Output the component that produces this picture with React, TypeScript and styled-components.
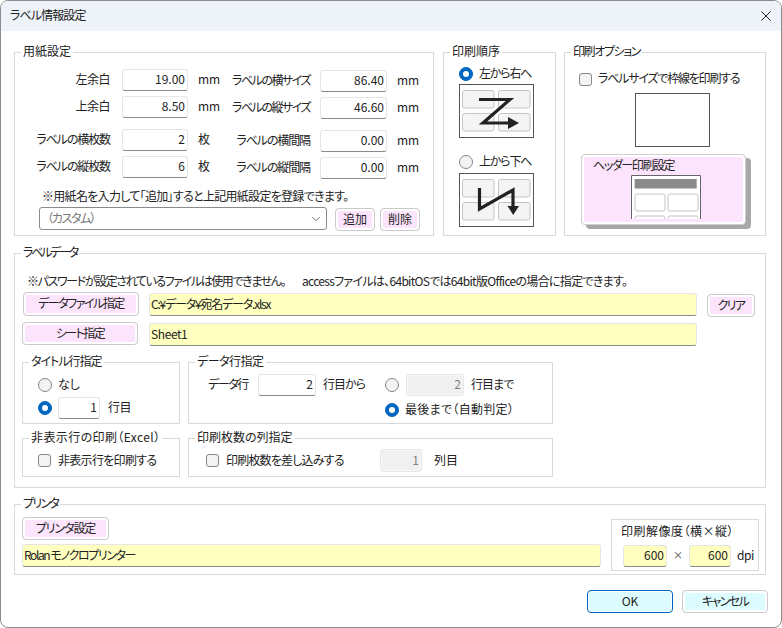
import React from "react";
import styled, { createGlobalStyle } from "styled-components";
import { ChevronDown } from "lucide-react";

const GlobalStyle = createGlobalStyle`
  html, body {
    margin: 0;
    padding: 0;
    background: #fff;
  }
  * {
    box-sizing: border-box;
  }
`;

const Win = styled.div`
  width: 782px;
  height: 628px;
  background: #fff;
  border: 1px solid #8c8c8c;
  border-radius: 8px;
  overflow: hidden;
  color: #222;
  font-family: "Noto Sans CJK JP", sans-serif;
  font-size: 12px;
  line-height: 16px;
  font-feature-settings: "palt";
  white-space: nowrap;
`;

const TitleBar = styled.div`
  height: 30px;
  background: #eef3fa;
  display: flex;
  align-items: center;
  justify-content: space-between;
  padding: 0 10px 0 9px;
`;

const Body = styled.div`
  padding: 21px 0 0 13px;
`;

const TopRow = styled.div`
  display: flex;
`;

const Group = styled.div<{ $w?: number; $h?: number; $ml?: number; $mt?: number; $pt?: number; $pl?: number }>`
  position: relative;
  width: ${(p) => (p.$w ? `${p.$w}px` : "auto")};
  height: ${(p) => (p.$h ? `${p.$h}px` : "auto")};
  margin-left: ${(p) => p.$ml || 0}px;
  margin-top: ${(p) => p.$mt || 0}px;
  padding-top: ${(p) => p.$pt || 0}px;
  padding-left: ${(p) => p.$pl || 0}px;
  border: 1px solid #d9d9d9;
`;

const Legend = styled.div<{ $sp?: number }>`
  position: absolute;
  top: -10px;
  left: 6px;
  padding: 0 2px;
  background: #fff;
  letter-spacing: ${(p) => p.$sp || 0}px;
`;

const PaperCols = styled.div`
  display: flex;
`;

const Col = styled.div<{ $w?: number; $pt?: number }>`
  display: flex;
  flex-direction: column;
  gap: 5px;
  width: ${(p) => (p.$w ? `${p.$w}px` : "auto")};
  padding-top: ${(p) => p.$pt || 0}px;
`;

const Row = styled.div<{ $mt?: number; $ml?: number; $gap?: number; $h?: number; $start?: boolean }>`
  display: flex;
  align-items: ${(p) => (p.$start ? "flex-start" : "center")};
  gap: ${(p) => p.$gap || 0}px;
  height: ${(p) => (p.$h ? `${p.$h}px` : "auto")};
  margin-top: ${(p) => p.$mt || 0}px;
  margin-left: ${(p) => p.$ml || 0}px;
`;

const Label = styled.span<{ $w?: number; $align?: string; $ml?: number; $sp?: number }>`
  display: inline-block;
  flex: none;
  width: ${(p) => (p.$w ? `${p.$w}px` : "auto")};
  margin-left: ${(p) => p.$ml || 0}px;
  padding-bottom: 2px;
  text-align: ${(p) => p.$align || "left"};
  letter-spacing: ${(p) => p.$sp || 0}px;
`;

const Times = styled.span`
  flex: none;
  width: 22px;
  padding-bottom: 2px;
  text-align: center;
  font-size: 10px;
  color: #444;
`;

const Field = styled.div<{ $w: number; $h?: number; $tone?: "white" | "yellow" | "off"; $left?: boolean; $mt?: number; $ml?: number; $sp?: number }>`
  flex: none;
  width: ${(p) => p.$w}px;
  height: ${(p) => p.$h || 22}px;
  margin-top: ${(p) => p.$mt || 0}px;
  margin-left: ${(p) => p.$ml || 0}px;
  padding: 0 ${(p) => (p.$left ? 0 : 2)}px 2px ${(p) => (p.$left ? 1 : 0)}px;
  display: flex;
  align-items: center;
  justify-content: ${(p) => (p.$left ? "flex-start" : "flex-end")};
  border: 1px solid #e6e6e6;
  border-bottom-color: ${(p) => (p.$tone === "off" ? "#e6e6e6" : "#8a8a8a")};
  border-radius: 3px;
  color: ${(p) => (p.$tone === "off" ? "#808080" : "#222")};
  background: ${(p) =>
    p.$tone === "yellow" ? "#ffffc0" : p.$tone === "off" ? "#f0f0f0" : "#fff"};
  box-shadow: ${(p) => (p.$tone === "off" ? "inset 0 0 0 1px #f8f8f8" : "none")};
  letter-spacing: ${(p) => p.$sp || 0}px;
`;

const Combo = styled.div`
  width: 288px;
  height: 23px;
  flex: none;
  display: flex;
  align-items: center;
  justify-content: space-between;
  padding: 0 3px 0 7px;
  border: 1px solid #8a8a8a;
  border-radius: 3px;
  color: #777;
`;

const Btn = styled.div<{ $w: number; $h?: number; $tone?: "pink" | "cyan"; $mt?: number; $ml?: number; $primary?: boolean; $sp?: number }>`
  flex: none;
  width: ${(p) => p.$w}px;
  height: ${(p) => p.$h || 23}px;
  margin-top: ${(p) => p.$mt || 0}px;
  margin-left: ${(p) => p.$ml || 0}px;
  padding-bottom: 2px;
  display: flex;
  align-items: center;
  justify-content: center;
  border: 1px solid ${(p) => (p.$primary ? "#0067c0" : "#cacaca")};
  border-radius: 4px;
  background: ${(p) => (p.$tone === "cyan" ? "#dcfcff" : "#fce4fc")};
  box-shadow: inset 0 0 0 ${(p) => (p.$primary ? 1 : 2)}px #fff;
  letter-spacing: ${(p) => p.$sp || 0}px;
`;

const Radio = styled.span<{ $on?: boolean }>`
  flex: none;
  width: 14px;
  height: 14px;
  border-radius: 50%;
  display: flex;
  align-items: center;
  justify-content: center;
  border: 1px solid ${(p) => (p.$on ? "#0067c0" : "#858585")};
  background: ${(p) => (p.$on ? "#0067c0" : "#f3f3f3")};
  &::after {
    content: "";
    display: ${(p) => (p.$on ? "block" : "none")};
    width: 6px;
    height: 6px;
    border-radius: 50%;
    background: #fff;
  }
`;

const Check = styled.span`
  flex: none;
  width: 13px;
  height: 13px;
  border: 1px solid #858585;
  border-radius: 3px;
  background: #f4f4f4;
`;

const Diagram = styled.svg<{ $mt?: number; $ml?: number }>`
  display: block;
  width: 75px;
  height: 54px;
  margin-top: ${(p) => p.$mt || 0}px;
  margin-left: ${(p) => p.$ml || 0}px;
`;

const Frame = styled.div`
  width: 75px;
  height: 54px;
  margin: 6px 0 0 56px;
  border: 1px solid #555;
`;

const HeaderButton = styled.div`
  width: 165px;
  height: 71px;
  margin: 7px 0 0 2px;
  padding: 2px 0 0 11px;
  border: 1px solid #cfcfcf;
  border-radius: 4px;
  background: #fce4fc;
  box-shadow: inset 0 0 0 2px #fff, 5px 4px 0 #a8a8a8;
  overflow: hidden;
  letter-spacing: -1.4px;
`;

const MiniSheet = styled.svg`
  display: block;
  width: 70px;
  height: 44px;
  margin: 2px 0 0 38px;
`;

const Note = styled.div<{ $ml: number; $mt: number; $sp?: number }>`
  margin-left: ${(p) => p.$ml}px;
  margin-top: ${(p) => p.$mt}px;
  height: 16px;
  letter-spacing: ${(p) => p.$sp || 0}px;
`;

const SubGrid = styled.div`
  display: grid;
  grid-template-columns: 158px 365px;
  grid-template-rows: 62px 39px;
  column-gap: 8px;
  row-gap: 14px;
  margin: 16px 0 0 7px;
`;

const PrinterRow = styled.div`
  display: flex;
`;

const PrinterLeft = styled.div`
  width: 596px;
  padding: 12px 0 0 7px;
`;

const ResBox = styled.div`
  width: 148px;
  height: 52px;
  margin-top: 14px;
  padding: 3px 0 0 9px;
  border: 1px solid #d9d9d9;
`;

const Footer = styled.div`
  display: flex;
  justify-content: flex-end;
  gap: 9px;
  margin-top: 15px;
  padding-right: 13px;
`;

const CellPath = () => (
  <>
    <rect x="3.5" y="6.5" width="31.5" height="17.5" rx="2" fill="#f4f4f4" stroke="#c4c4c4" />
    <rect x="39.5" y="6.5" width="31.5" height="17.5" rx="2" fill="#f4f4f4" stroke="#c4c4c4" />
    <rect x="3.5" y="29.5" width="31.5" height="17.5" rx="2" fill="#f4f4f4" stroke="#c4c4c4" />
    <rect x="39.5" y="29.5" width="31.5" height="17.5" rx="2" fill="#f4f4f4" stroke="#c4c4c4" />
  </>
);

const DiagramFrame = () => <rect x="0.5" y="0.5" width="74" height="53" fill="#fff" stroke="#555" />;

const App: React.FC = () => {
  return (
    <>
      <GlobalStyle />
      <Win>
        <TitleBar>
          <Label $sp={-0.9}>ラベル情報設定</Label>
          <svg width="10" height="10" viewBox="0 0 10 10">
            <path d="M0.5 0.5 L9.5 9.5 M9.5 0.5 L0.5 9.5" stroke="#222" strokeWidth="1" fill="none" />
          </svg>
        </TitleBar>
        <Body>
          <TopRow>
            <Group $w={420} $h={184} $pt={16}>
              <Legend>用紙設定</Legend>
              <PaperCols>
                <Col $w={217}>
                  <Row $h={22}>
                    <Label $w={95} $align="right" $sp={-0.5}>左余白</Label>
                    <Field $w={66} $ml={12}>19.00</Field>
                    <Label $ml={10}>mm</Label>
                  </Row>
                  <Row $h={22}>
                    <Label $w={95} $align="right" $sp={-0.5}>上余白</Label>
                    <Field $w={66} $ml={12}>8.50</Field>
                    <Label $ml={10}>mm</Label>
                  </Row>
                  <Row $h={22} $mt={6}>
                    <Label $w={95} $align="right" $sp={-1.1}>ラベルの横枚数</Label>
                    <Field $w={66} $ml={12}>2</Field>
                    <Label $ml={10}>枚</Label>
                  </Row>
                  <Row $h={22}>
                    <Label $w={95} $align="right" $sp={-1.1}>ラベルの縦枚数</Label>
                    <Field $w={66} $ml={12}>6</Field>
                    <Label $ml={10}>枚</Label>
                  </Row>
                </Col>
                <Col $pt={1}>
                  <Row $h={22}>
                    <Label $w={78} $align="right" $sp={-1.5}>ラベルの横サイズ</Label>
                    <Field $w={67} $ml={10}>86.40</Field>
                    <Label $ml={10}>mm</Label>
                  </Row>
                  <Row $h={22}>
                    <Label $w={78} $align="right" $sp={-1.5}>ラベルの縦サイズ</Label>
                    <Field $w={67} $ml={10}>46.60</Field>
                    <Label $ml={10}>mm</Label>
                  </Row>
                  <Row $h={22} $mt={6}>
                    <Label $w={78} $align="right" $sp={-1.1}>ラベルの横間隔</Label>
                    <Field $w={67} $ml={10}>0.00</Field>
                    <Label $ml={10}>mm</Label>
                  </Row>
                  <Row $h={22}>
                    <Label $w={78} $align="right" $sp={-1.1}>ラベルの縦間隔</Label>
                    <Field $w={67} $ml={10}>0.00</Field>
                    <Label $ml={10}>mm</Label>
                  </Row>
                </Col>
              </PaperCols>
              <Note $ml={27} $mt={9} $sp={-0.7}>※用紙名を入力して「追加」すると上記用紙設定を登録できます。</Note>
              <Row $ml={24} $mt={3} $start>
                <Combo>
                  <Label $sp={-1.3}>（カスタム）</Label>
                  <ChevronDown size={14} strokeWidth={1.25} color="#444" />
                </Combo>
                <Btn $w={40} $mt={1} $ml={8}>追加</Btn>
                <Btn $w={40} $mt={1} $ml={5}>削除</Btn>
              </Row>
            </Group>

            <Group $w={113} $h={184} $ml={9} $pt={13} $pl={15}>
              <Legend>印刷順序</Legend>
              <Row $h={16} $gap={6}>
                <Radio $on />
                <Label $sp={-1.2}>左から右へ</Label>
              </Row>
              <Diagram $mt={2} viewBox="0 0 75 54">
                <DiagramFrame />
                <CellPath />
                <path d="M20 15.5 H51 L24 39 H50" fill="none" stroke="#222" strokeWidth="3.2" />
                <path d="M49 33 L60 39 L49 45 Z" fill="#222" />
              </Diagram>
              <Row $h={16} $gap={6} $mt={16}>
                <Radio />
                <Label $sp={-1.2}>上から下へ</Label>
              </Row>
              <Diagram $mt={3} viewBox="0 0 75 54">
                <DiagramFrame />
                <CellPath />
                <path d="M20.5 15 V36 L54 17 V34" fill="none" stroke="#222" strokeWidth="3.2" />
                <path d="M48.5 33 H60 L54.2 42 Z" fill="#222" />
              </Diagram>
            </Group>

            <Group $w={202} $h={184} $ml={8} $pt={18} $pl={14}>
              <Legend $sp={-1.4}>印刷オプション</Legend>
              <Row $h={16} $gap={6}>
                <Check />
                <Label $sp={-1.2}>ラベルサイズで枠線を印刷する</Label>
              </Row>
              <Frame />
              <HeaderButton>
                ヘッダー印刷設定
                <MiniSheet viewBox="0 0 70 44">
                  <path d="M0.5 44 V0.5 H69.5 V44" fill="#fff" stroke="#666" />
                  <rect x="3.7" y="4" width="62" height="9.5" fill="#8a8a8a" />
                  <rect x="4" y="19" width="30" height="17" rx="2" fill="#fff" stroke="#c4c4c4" />
                  <rect x="37" y="19" width="30" height="17" rx="2" fill="#fff" stroke="#c4c4c4" />
                  <rect x="4" y="41" width="30" height="17" rx="2" fill="#fff" stroke="#c4c4c4" />
                  <rect x="37" y="41" width="30" height="17" rx="2" fill="#fff" stroke="#c4c4c4" />
                </MiniSheet>
              </HeaderButton>
            </Group>
          </TopRow>

          <Group $w={752} $h={235} $mt={17} $pt={19}>
            <Legend $sp={-2.2}>ラベルデータ</Legend>
            <Row $ml={12} $h={19} $start>
              <Label $w={275} $sp={-1.4}>※パスワードが設定されているファイルは使用できません。</Label>
              <Label $sp={-0.7}>accessファイルは、64bitOSでは64bit版Officeの場合に指定できます。</Label>
            </Row>
            <Row $ml={8} $start>
              <Btn $w={116} $h={24} $sp={-1.5}>データファイル指定</Btn>
              <Field $w={548} $h={23} $tone="yellow" $left $mt={1} $ml={10} $sp={-1.2}>C:¥データ¥宛名データ.xlsx</Field>
              <Btn $w={48} $h={23} $mt={2} $ml={10} $sp={-1.6}>クリア</Btn>
            </Row>
            <Row $ml={7} $mt={5} $start>
              <Btn $w={116} $sp={-1.6}>シート指定</Btn>
              <Field $w={548} $h={23} $tone="yellow" $left $mt={1} $ml={11} $sp={-0.4}>Sheet1</Field>
            </Row>
            <SubGrid>
              <Group $pt={14} $pl={15}>
                <Legend $sp={-1}>タイトル行指定</Legend>
                <Row $h={16} $gap={6}>
                  <Radio />
                  <Label>なし</Label>
                </Row>
                <Row $h={22} $mt={4} $gap={6}>
                  <Radio $on />
                  <Field $w={42}>1</Field>
                  <Label $ml={2} $sp={-0.5}>行目</Label>
                </Row>
              </Group>
              <Group $pt={11} $pl={19}>
                <Legend $sp={-0.5}>データ行指定</Legend>
                <Row $h={22}>
                  <Label $w={50} $sp={-1.4}>データ行</Label>
                  <Field $w={58}>2</Field>
                  <Label $w={62} $ml={7} $sp={-1}>行目から</Label>
                  <Radio />
                  <Field $w={58} $tone="off" $ml={7}>2</Field>
                  <Label $ml={7} $sp={-1}>行目まで</Label>
                </Row>
                <Row $h={16} $gap={6} $mt={6} $ml={177}>
                  <Radio $on />
                  <Label $sp={0.3}>最後まで（自動判定）</Label>
                </Row>
              </Group>
              <Group $pt={10} $pl={15}>
                <Legend $sp={0.4}>非表示行の印刷（Excel）</Legend>
                <Row $h={23} $gap={7}>
                  <Check />
                  <Label $sp={-0.7}>非表示行を印刷する</Label>
                </Row>
              </Group>
              <Group $pt={10} $pl={17}>
                <Legend>印刷枚数の列指定</Legend>
                <Row $h={23}>
                  <Check />
                  <Label $w={154} $ml={7} $sp={-0.8}>印刷枚数を差し込みする</Label>
                  <Field $w={42} $h={23} $tone="off">1</Field>
                  <Label $ml={12}>列目</Label>
                </Row>
              </Group>
            </SubGrid>
          </Group>

          <Group $w={752} $h={71} $mt={16}>
            <Legend $sp={-1.7}>プリンタ</Legend>
            <PrinterRow>
              <PrinterLeft>
                <Btn $w={87} $sp={-1.1}>プリンタ設定</Btn>
                <Field $w={579} $h={23} $tone="yellow" $left $mt={4} $sp={-1.4}>Rolan モノクロプリンター</Field>
              </PrinterLeft>
              <ResBox>
                <Label $sp={0.5}>印刷解像度（横×縦）</Label>
                <Row $ml={2} $mt={4}>
                  <Field $w={44} $tone="yellow">600</Field>
                  <Times>×</Times>
                  <Field $w={42} $tone="yellow">600</Field>
                  <Label $ml={6} $sp={-0.5}>dpi</Label>
                </Row>
              </ResBox>
            </PrinterRow>
          </Group>

          <Footer>
            <Btn $w={86} $tone="cyan" $primary>OK</Btn>
            <Btn $w={86} $tone="cyan" $sp={-1.6}>キャンセル</Btn>
          </Footer>
        </Body>
      </Win>
    </>
  );
};

export default App;
